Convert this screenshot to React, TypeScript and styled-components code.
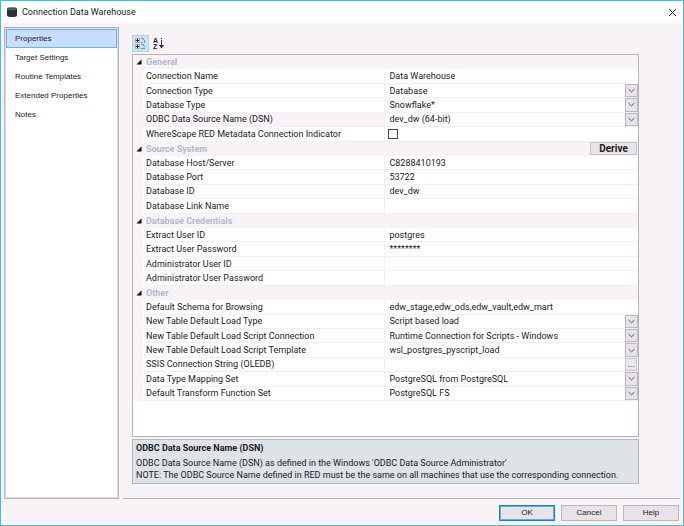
import React from "react";
import styled, { createGlobalStyle, css } from "styled-components";

const GlobalStyle = createGlobalStyle`
  *, *::before, *::after { box-sizing: border-box; }
  html, body { margin: 0; }
  body {
    background: #f7f3f7;
    color: #1c1a1e;
    font-family: Roboto, "Open Sans", sans-serif;
    font-size: 9px;
    line-height: 12px;
  }
  button, input, select { font: inherit; color: inherit; }
`;

const dialogFont = css`
  font-family: "Liberation Sans", Arial, sans-serif;
  font-size: 8px;
`;

const Dialog = styled.div`
  display: flex;
  flex-direction: column;
  min-height: 100vh;
  border: 1px solid #4ab9e3;
  background: #f7f3f7;
`;

const TitleBar = styled.header`
  display: flex;
  align-items: center;
  gap: 5px;
  height: 22px;
  padding: 0 5px 0 6px;
  background: #fff;
`;

const Title = styled.h1`
  flex: 1;
  margin: 0;
  font-size: 9px;
  font-weight: 400;
`;

const CloseButton = styled.button`
  display: flex;
  padding: 1px;
  border: 0;
  background: none;
`;

const Body = styled.div`
  flex: 1;
  display: flex;
  gap: 4px;
  padding: 4px 3px 0;
`;

const Nav = styled.nav`
  ${dialogFont}
  flex: 0 0 115px;
  padding: 1px;
  border: 1px solid #b4b3bb;
  outline: 1px solid #dddbe1;
  outline-offset: -2px;
  background: #fff;
`;

const NavItem = styled.a<{ $active?: boolean }>`
  display: flex;
  align-items: center;
  height: 19px;
  padding-left: 8px;
  border: 1px solid ${(p) => (p.$active ? "#66b2f5" : "transparent")};
  background: ${(p) => (p.$active ? "#c7dffc" : "transparent")};
  color: inherit;
  text-decoration: none;
`;

const Main = styled.main`
  flex: 1;
  min-width: 0;
  display: flex;
  flex-direction: column;
  padding: 8px 41px 14px 9px;
  border-bottom: 1px solid #b3b1b5;
`;

const Toolbar = styled.div`
  display: flex;
  gap: 1px;
  margin-bottom: 2px;
`;

const ToolButton = styled.button<{ $pressed?: boolean }>`
  display: flex;
  align-items: center;
  justify-content: center;
  width: 17px;
  height: 17px;
  padding: 0;
  border: 1px solid ${(p) => (p.$pressed ? "#a9d4f3" : "transparent")};
  background: ${(p) => (p.$pressed ? "#c9e3f8" : "transparent")};
`;

const Sheet = styled.form`
  flex: 1;
  border: 1px solid #b5b3b7;
  background: #fff;
`;

const Rows = styled.div`
  display: grid;
  grid-auto-rows: 1fr;
  height: 346px;
`;

const GroupRow = styled.div`
  display: grid;
  grid-template-columns: 10px 1fr auto;
  align-items: center;
  background: #f7f3f7;
`;

const GroupTitle = styled.h2`
  margin: 0;
  padding-left: 3px;
  color: #b3b9cf;
  font-size: 9px;
  font-weight: 700;
`;

const DeriveButton = styled.button`
  width: 47px;
  height: 13px;
  margin-right: 1px;
  padding: 0;
  border: 1px solid #c3c0c5;
  background: #e7e3e8;
  font-size: 10px;
  font-weight: 700;
  line-height: 10px;
`;

const PropertyRow = styled.div`
  display: grid;
  grid-template-columns: 10px minmax(120px, 48fr) minmax(0, 50fr);
  min-height: 0;
  background: #f7f3f7;
`;

const PropertyLabel = styled.label<{ $selected?: boolean }>`
  grid-column: 2;
  display: flex;
  align-items: center;
  padding-left: 3px;
  border-right: 1px solid #f3eff3;
  border-bottom: 1px solid #f3eff3;
  background: ${(p) => (p.$selected ? "#f7f3f7" : "#fff")};
  white-space: nowrap;
`;

const PropertyValue = styled.div`
  display: flex;
  align-items: stretch;
  min-width: 0;
  border-bottom: 1px solid #f3eff3;
  background: #fff;
`;

const field = css`
  flex: 1;
  align-self: center;
  min-width: 0;
  width: 100%;
  height: 12px;
  margin: 0;
  padding: 0 0 0 4px;
  border: 0;
  outline: 0;
  background: transparent;
  line-height: 12px;
`;

const TextField = styled.input`
  ${field}
`;

const SelectWrap = styled.div`
  flex: 1;
  display: grid;
  grid-template-columns: 1fr 13px;
`;

const SelectField = styled.select`
  ${field}
  grid-area: 1 / 1 / 2 / 3;
  appearance: none;
`;

const DropMark = styled.span`
  grid-area: 1 / 2;
  display: flex;
  align-items: center;
  justify-content: center;
  border: 1px solid #bbb8bd;
  background: #e7e3e8;
  pointer-events: none;
`;

const BrowseButton = styled.button`
  width: 12px;
  margin-right: 1px;
  padding: 0;
  border: 1px solid #c9c6cb;
  background: #ebe8ec;
  line-height: 8px;
`;

const CheckField = styled.input`
  appearance: none;
  align-self: center;
  width: 10px;
  height: 10px;
  margin: 0 0 0 3px;
  border: 1px solid #454347;
  background: #fff;
`;

const HelpPanel = styled.section`
  margin-top: 2px;
  padding: 2px 3px;
  border: 1px solid #b5b8bb;
  background: #dde3e7;
`;

const HelpTitle = styled.h3`
  margin: 0 0 2px;
  font-size: 9px;
  line-height: 13px;
  font-weight: 700;
`;

const HelpText = styled.p`
  margin: 0;
`;

const Footer = styled.footer`
  ${dialogFont}
  display: flex;
  justify-content: flex-end;
  gap: 6px;
  padding: 6px 4px 4px;
`;

const FooterButton = styled.button<{ $primary?: boolean }>`
  width: 56px;
  height: 16px;
  padding: 0;
  border: 1px solid ${(p) => (p.$primary ? "#1680d8" : "#bab8bd")};
  box-shadow: ${(p) => (p.$primary ? "inset 0 0 0 1px #6cabe0" : "none")};
  background: #e7e3e8;
`;

const DatabaseIcon = () => (
  <svg width="10" height="10" viewBox="0 0 10 10" aria-hidden="true">
    <path d="M0 1.500v7c0 2 10 2 10 0v-7z" fill="#2b323c" />
    <ellipse cx="5" cy="1.600" rx="4.900" ry="1.400" fill="#4c545e" />
    <path d="M.2 2c1.300 1.300 8.300 1.300 9.600 0" fill="none" stroke="#7c848d" strokeWidth=".4" />
  </svg>
);

const CloseIcon = () => (
  <svg width="9" height="9" viewBox="0 0 9 9" aria-hidden="true">
    <path d="M1 1l7 7M8 1L1 8" stroke="#29272b" />
  </svg>
);

const CategoryIcon = () => (
  <svg width="11" height="11" viewBox="0 0 11 11" aria-hidden="true">
    <path d="M.5 .5h4v4h-4zM.5 6.500h4v4h-4z" fill="#fff" stroke="#a3a9ae" />
    <path d="M1 2.500h3M2.500 1v3M1 8.500h3M2.500 7v3" stroke="#25272a" />
    <path d="M6 .5h3M8.500 1v1M9.500 2v3M6 4.500h2M6 6.500h3M8.500 7v1M9.500 8v1M6 10.500h4" fill="none" stroke="#8a949c" />
  </svg>
);

const SortIcon = () => (
  <svg width="11" height="13" viewBox="0 0 11 13" aria-hidden="true">
    <g fontFamily="Liberation Sans, sans-serif" fontSize="7" fontWeight="700" fill="#242226">
      <text x="0" y="6">A</text>
      <text x="0" y="12">Z</text>
    </g>
    <path d="M8.500 1v1M8.500 3v6" stroke="#26268c" />
    <path d="M6 8h5L8.500 11.500z" fill="#20208c" />
  </svg>
);

const ExpandedIcon = () => (
  <svg width="10" height="6" viewBox="0 0 10 6" aria-hidden="true">
    <path d="M8.500 .5v5H3.500z" fill="#0e0d0f" />
  </svg>
);

const ChevronIcon = () => (
  <svg width="7" height="5" viewBox="0 0 7 5" aria-hidden="true">
    <path d="M.5 1l3 2.800L6.500 1" fill="none" stroke="#59575b" />
  </svg>
);

type Kind = "text" | "select" | "check" | "browse";
type Property = { label: string; value?: string; kind?: Kind; selected?: boolean };
type Group = { title: string; action?: string; items: Property[] };

const groups: Group[] = [
  {
    title: "General",
    items: [
      { label: "Connection Name", value: "Data Warehouse" },
      { label: "Connection Type", value: "Database", kind: "select" },
      { label: "Database Type", value: "Snowflake*", kind: "select" },
      { label: "ODBC Data Source Name (DSN)", value: "dev_dw (64-bit)", kind: "select", selected: true },
      { label: "WhereScape RED Metadata Connection Indicator", kind: "check" },
    ],
  },
  {
    title: "Source System",
    action: "Derive",
    items: [
      { label: "Database Host/Server", value: "C8288410193" },
      { label: "Database Port", value: "53722" },
      { label: "Database ID", value: "dev_dw" },
      { label: "Database Link Name" },
    ],
  },
  {
    title: "Database Credentials",
    items: [
      { label: "Extract User ID", value: "postgres" },
      { label: "Extract User Password", value: "********" },
      { label: "Administrator User ID" },
      { label: "Administrator User Password" },
    ],
  },
  {
    title: "Other",
    items: [
      { label: "Default Schema for Browsing", value: "edw_stage,edw_ods,edw_vault,edw_mart" },
      { label: "New Table Default Load Type", value: "Script based load", kind: "select" },
      { label: "New Table Default Load Script Connection", value: "Runtime Connection for Scripts - Windows", kind: "select" },
      { label: "New Table Default Load Script Template", value: "wsl_postgres_pyscript_load", kind: "select" },
      { label: "SSIS Connection String (OLEDB)", kind: "browse" },
      { label: "Data Type Mapping Set", value: "PostgreSQL from PostgreSQL", kind: "select" },
      { label: "Default Transform Function Set", value: "PostgreSQL FS", kind: "select" },
    ],
  },
];

const sections = ["Properties", "Target Settings", "Routine Templates", "Extended Properties", "Notes"];

function Editor({ id, item }: { id: string; item: Property }) {
  if (item.kind === "check") return <CheckField id={id} type="checkbox" />;
  if (item.kind === "select")
    return (
      <SelectWrap>
        <SelectField id={id} defaultValue={item.value}>
          <option>{item.value}</option>
        </SelectField>
        <DropMark>
          <ChevronIcon />
        </DropMark>
      </SelectWrap>
    );
  return (
    <>
      <TextField id={id} type="text" defaultValue={item.value} />
      {item.kind === "browse" && (
        <BrowseButton type="button" aria-label="Browse">
          ...
        </BrowseButton>
      )}
    </>
  );
}

export default function App() {
  return (
    <>
      <GlobalStyle />
      <Dialog role="dialog" aria-labelledby="dialog-title">
        <TitleBar>
          <DatabaseIcon />
          <Title id="dialog-title">Connection Data Warehouse</Title>
          <CloseButton type="button" aria-label="Close">
            <CloseIcon />
          </CloseButton>
        </TitleBar>
        <Body>
          <Nav>
            {sections.map((name, i) => (
              <NavItem key={name} href="#" $active={i === 0}>
                {name}
              </NavItem>
            ))}
          </Nav>
          <Main>
            <Toolbar>
              <ToolButton type="button" $pressed aria-label="Categorized">
                <CategoryIcon />
              </ToolButton>
              <ToolButton type="button" aria-label="Alphabetical">
                <SortIcon />
              </ToolButton>
            </Toolbar>
            <Sheet>
              <Rows>
                {groups.map((group, g) => (
                  <React.Fragment key={group.title}>
                    <GroupRow>
                      <ExpandedIcon />
                      <GroupTitle>{group.title}</GroupTitle>
                      {group.action && <DeriveButton type="button">{group.action}</DeriveButton>}
                    </GroupRow>
                    {group.items.map((item, i) => {
                      const id = `property-${g}-${i}`;
                      return (
                        <PropertyRow key={id}>
                          <PropertyLabel htmlFor={id} $selected={item.selected}>
                            {item.label}
                          </PropertyLabel>
                          <PropertyValue>
                            <Editor id={id} item={item} />
                          </PropertyValue>
                        </PropertyRow>
                      );
                    })}
                  </React.Fragment>
                ))}
              </Rows>
            </Sheet>
            <HelpPanel>
              <HelpTitle>ODBC Data Source Name (DSN)</HelpTitle>
              <HelpText>ODBC Data Source Name (DSN) as defined in the Windows 'ODBC Data Source Administrator'</HelpText>
              <HelpText>
                NOTE: The ODBC Source Name defined in RED must be the same on all machines that use the corresponding
                connection.
              </HelpText>
            </HelpPanel>
          </Main>
        </Body>
        <Footer>
          <FooterButton type="button" $primary>
            OK
          </FooterButton>
          <FooterButton type="button">Cancel</FooterButton>
          <FooterButton type="button">Help</FooterButton>
        </Footer>
      </Dialog>
    </>
  );
}
